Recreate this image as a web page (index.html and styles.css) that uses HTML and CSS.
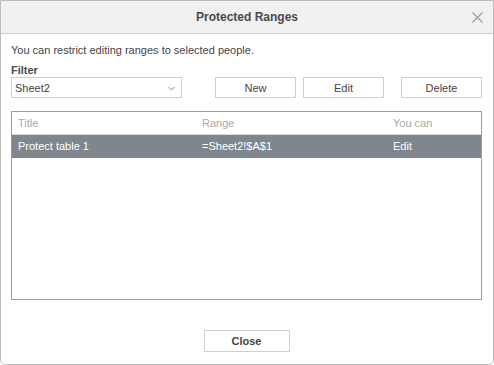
FILE: index.html
```html
<!DOCTYPE html>
<html>
<head>
    <title>Protected Ranges</title>
    <link rel="stylesheet" href="styles.css">
</head>
<body>
    <div class="dialog">
        <div class="header">
            <span class="title">Protected Ranges</span>
            <svg class="close-x" width="11" height="11" viewBox="0 0 11 11">
                <path d="M0.5 0.5 L10.5 10.5 M10.5 0.5 L0.5 10.5" stroke="#9a9a9a" stroke-width="1.1" fill="none"/>
            </svg>
        </div>

        <div class="content">
            <div class="hint">You can restrict editing ranges to selected people.</div>
            <div class="label">Filter</div>

            <div class="toolbar">
                <div class="select">
                    <span>Sheet2</span>
                    <svg class="chevron" width="7" height="5" viewBox="0 0 7 5">
                        <path d="M0.5 1 L3.5 4 L6.5 1" stroke="#888" stroke-width="1" fill="none"/>
                    </svg>
                </div>
                <button class="btn btn-new">New</button>
                <button class="btn btn-edit">Edit</button>
                <button class="btn btn-delete">Delete</button>
            </div>

            <div class="ranges">
                <table>
                    <colgroup>
                        <col class="col-title">
                        <col class="col-range">
                        <col>
                    </colgroup>
                    <thead>
                        <tr>
                            <th>Title</th>
                            <th>Range</th>
                            <th>You can</th>
                        </tr>
                    </thead>
                    <tbody>
                        <tr class="selected">
                            <td>Protect table 1</td>
                            <td>=Sheet2!$A$1</td>
                            <td>Edit</td>
                        </tr>
                    </tbody>
                </table>
            </div>
        </div>

        <div class="footer">
            <button class="btn btn-close">Close</button>
        </div>
    </div>
</body>
</html>
```

FILE: styles.css
```css
* { box-sizing: border-box; }
body { margin: 0; font-family: "Liberation Sans", Arial, sans-serif; font-size: 11px; color: #444; background: #fff; }

.dialog { width: 494px; height: 365px; border: 1px solid #bdbdbd; border-radius: 0 0 5px 5px; display: flex; flex-direction: column; background: #fff; }

.header { height: 33px; flex: none; background: #f1f1f1; border-bottom: 1px solid #cbcbcb; display: flex; align-items: center; justify-content: center; position: relative; }
.title { font-size: 12px; font-weight: bold; color: #4a4a4a; }
.close-x { position: absolute; right: 10px; top: 11px; }

.content { padding: 0 11px 0 10px; }
.hint { margin-top: 9px; line-height: 14px; }
.label { margin-top: 6px; line-height: 14px; font-weight: bold; color: #4a4a4a; }

.toolbar { display: flex; height: 21px; }
.select { width: 171px; height: 21px; border: 1px solid #cfcfcf; display: flex; align-items: center; justify-content: space-between; padding: 0 6px 0 3px; color: #444; }
.chevron { margin-top: 2px; }

.btn { height: 21px; border: 1px solid #cfcfcf; background: #fff; font-family: "Liberation Sans", Arial, sans-serif; font-size: 11px; color: #444; padding: 0; }
.btn-new { width: 81px; margin-left: 33px; }
.btn-edit { width: 81px; margin-left: 7px; }
.btn-delete { width: 81px; margin-left: 17px; }

.ranges { margin-top: 13px; height: 189px; border: 1px solid #9d9d9d; }
table { width: 100%; border-collapse: collapse; table-layout: fixed; }
.col-title { width: 184px; }
.col-range { width: 191px; }
th, td { text-align: left; padding: 0 6px; height: 23px; white-space: nowrap; }
th { font-weight: normal; color: #a9a9a9; border-bottom: 1px solid #d8d8d8; height: 22px; }
tr.selected td { background: #7f868d; color: #fff; height: 24px; }

.footer { margin-top: auto; display: flex; justify-content: center; padding-bottom: 12px; }
.btn-close { width: 86px; height: 22px; font-weight: bold; margin-left: -1px; }
```
